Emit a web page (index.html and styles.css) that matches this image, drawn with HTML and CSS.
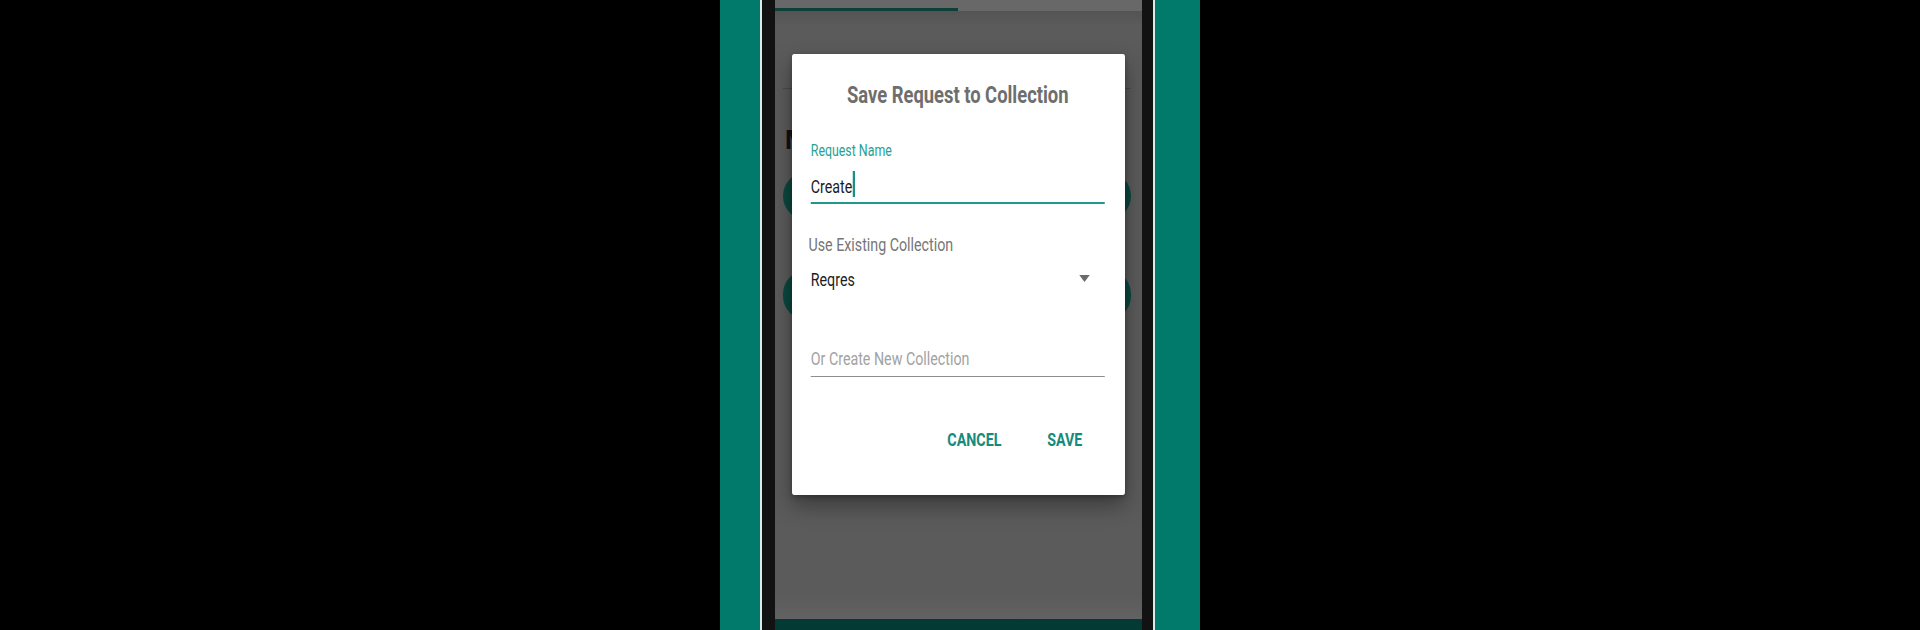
FILE: index.html
```html
<!DOCTYPE html>
<html lang="en">
<head>
<meta charset="utf-8">
<title>Save Request to Collection</title>
<link rel="stylesheet" href="styles.css">
</head>
<body>
<div class="stage">
  <div class="case">
    <div class="frame">
      <div class="screen">
        <div class="tabbar"><div class="tab-indicator"></div></div>
        <div class="app">
          <div class="rule"></div>
          <div class="heading">Method</div>
          <div class="pill"></div>
          <div class="pill pill-2"></div>
        </div>
        <div class="bottombar"></div>

        <div class="dialog">
          <h2 class="dialog-title">Save Request to Collection</h2>
          <div class="field-label">Request Name</div>
          <div class="field-input">Create<span class="caret"></span></div>
          <div class="section-label">Use Existing Collection</div>
          <div class="select-row">
            <span class="select-value">Reqres</span>
            <span class="select-arrow"></span>
          </div>
          <div class="new-input">Or Create New Collection</div>
          <div class="actions">
            <button class="action">CANCEL</button>
            <button class="action">SAVE</button>
          </div>
        </div>
      </div>
    </div>
  </div>
</div>
</body>
</html>
```

FILE: styles.css
```css
html, body {
  margin: 0;
  padding: 0;
  background: #000;
  width: 1920px;
  height: 630px;
  overflow: hidden;
}

.stage {
  display: flex;
  justify-content: center;
  height: 630px;
}

.case {
  width: 480px;
  height: 630px;
  box-sizing: border-box;
  background: #017a6b;
  padding: 0 45px 0 40px;
}

.frame {
  height: 630px;
  box-sizing: border-box;
  background: #121212;
  border-left: 2px solid #d9ece8;
  border-right: 2px solid #d9ece8;
  padding: 0 11px 0 13px;
}

.screen {
  position: relative;
  width: 367px;
  height: 630px;
  background: #5b5b5b;
  display: flex;
  flex-direction: column;
  overflow: hidden;
}

.tabbar {
  height: 11px;
  background: #686868;
  display: flex;
  align-items: flex-end;
}

.tab-indicator {
  width: 183px;
  height: 3px;
  background: #0f3f39;
}

.app {
  flex: 1;
  display: flex;
  flex-direction: column;
  padding: 0 11px 0 8px;
  background: linear-gradient(#545454 0, #5b5b5b 14px, #5b5b5b 96%, #626262 100%);
}

.rule {
  margin-top: 77px;
  height: 1px;
  background: #4b4b4b;
}

.heading {
  margin-top: 36px;
  padding-left: 2px;
  font-family: Roboto, "Liberation Sans", sans-serif;
  font-weight: 700;
  font-size: 26px;
  line-height: 30px;
  color: #121212;
}

.pill {
  margin-top: 17px;
  height: 48px;
  border-radius: 24px;
  background: #0b4840;
}

.pill-2 {
  margin-top: 50px;
  height: 50px;
}

.bottombar {
  height: 11px;
  background: #033a33;
}

.dialog {
  position: absolute;
  left: 17px;
  top: 54px;
  width: 444px;
  box-sizing: border-box;
  padding: 27px 27px 43px 25px;
  background: #fff;
  border-radius: 3px;
  box-shadow: 0 10px 26px rgba(0, 0, 0, 0.38), 0 2px 6px rgba(0, 0, 0, 0.25);
  transform: scaleX(0.75);
  transform-origin: 0 0;
  font-family: Roboto, "Liberation Sans", sans-serif;
  font-size: 19px;
  line-height: 24px;
  color: #1c1c1c;
}

.dialog-title {
  margin: 0;
  font-size: 24.5px;
  line-height: 28px;
  font-weight: 700;
  color: #6e6e6e;
  text-align: center;
}

.field-label {
  margin-top: 32px;
  font-size: 16.5px;
  line-height: 20px;
  color: #27a196;
}

.field-input {
  margin-top: 10px;
  padding-bottom: 3px;
  border-bottom: 2px solid #1f978a;
}

.caret {
  display: inline-block;
  width: 2.5px;
  height: 26px;
  background: #1a8f82;
  vertical-align: -4px;
  margin-left: 1px;
}

.section-label {
  margin-top: 28.5px;
  margin-left: -3px;
  color: #767676;
}

.select-row {
  margin-top: 11px;
  display: flex;
  justify-content: space-between;
  align-items: center;
}

.select-arrow {
  width: 0;
  height: 0;
  border-left: 7px solid transparent;
  border-right: 7px solid transparent;
  border-top: 7px solid #6b6b6b;
  margin-right: 20px;
  margin-top: -3px;
}

.new-input {
  margin-top: 55px;
  padding-bottom: 5px;
  border-bottom: 1px solid #8e8e8e;
  color: #a2a2a2;
}

.actions {
  margin-top: 51px;
  display: flex;
  justify-content: flex-end;
  gap: 61px;
  padding-right: 30px;
}

.action {
  background: none;
  border: 0;
  padding: 0;
  margin: 0;
  font-family: inherit;
  font-size: 19px;
  line-height: 24px;
  font-weight: 700;
  color: #168a7c;
}
```
